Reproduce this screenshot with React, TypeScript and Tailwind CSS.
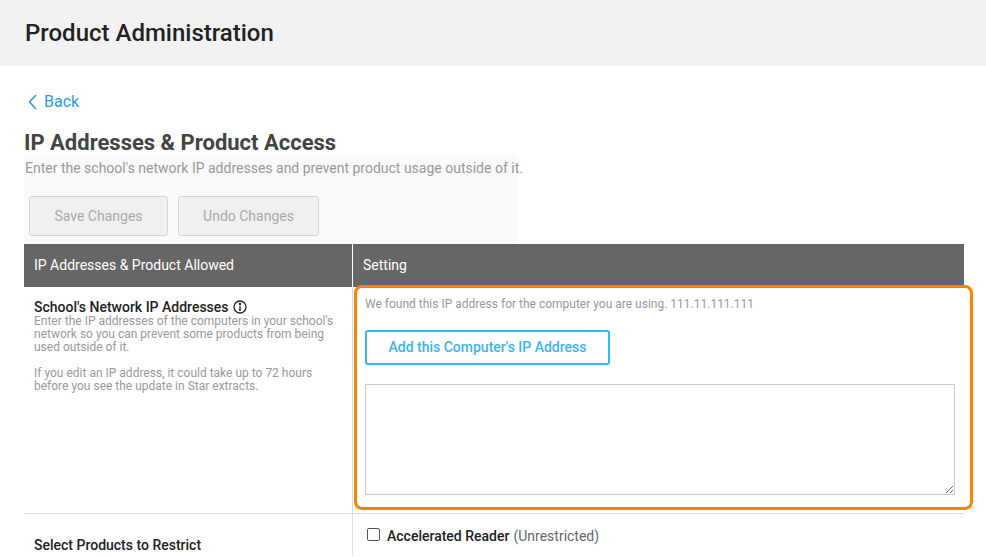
export default function App() {
  return (
    <div className="w-[986px] h-[557px] overflow-hidden bg-white text-[#333] [font-family:Roboto,Arial,sans-serif]">
      <div className="h-[66px] bg-[#f2f2f2] flex items-center px-[25px]">
        <h1 className="text-[24px] font-medium text-[#222]">Product Administration</h1>
      </div>
      <div className="pl-[24px] pr-[22px]">
        <div className="mt-[26px] flex items-center gap-[6px] text-[#2e9ce6] text-[16px] pl-[4px] leading-[20px]">
          <svg width="10" height="16" viewBox="0 0 10 16" fill="none" stroke="currentColor" strokeWidth="1.6"><path d="M8 1 1.5 8 8 15" /></svg>
          Back
        </div>
        <h2 className="mt-[17px] text-[22px] font-bold text-[#444] leading-[28px]">IP Addresses &amp; Product Access</h2>
        <div className="w-[494px] bg-[#fafafa] -mt-[2px] pb-[8px]">
          <p className="text-[14px] text-[#999] leading-[26px] pl-[1px] whitespace-nowrap">Enter the school's network IP addresses and prevent product usage outside of it.</p>
          <div className="flex gap-[10px] mt-[15px] pl-[5px]">
            <button className="w-[139px] h-[40px] border border-[#d6d6d6] rounded-[3px] bg-[#f0f0f0] text-[#aaa] text-[14px]">Save Changes</button>
            <button className="w-[141px] h-[40px] border border-[#d6d6d6] rounded-[3px] bg-[#f0f0f0] text-[#aaa] text-[14px]">Undo Changes</button>
          </div>
        </div>
        <div className="w-[940px]">
          <div className="flex h-[43px] bg-[#666] text-white text-[14px]">
            <div className="w-[329px] border-r border-white flex items-center px-[10px]">IP Addresses &amp; Product Allowed</div>
            <div className="flex-1 flex items-center px-[10px]">Setting</div>
          </div>
          <div className="flex border-b border-[#ddd]">
            <div className="w-[329px] border-r border-[#ddd] px-[10px] pt-[12px]">
              <div className="flex items-center gap-[4px] text-[14px] text-[#222] font-medium leading-[16px]">
                School's Network IP Addresses
                <svg width="14" height="14" viewBox="0 0 14 14" fill="none" stroke="#222" strokeWidth="1.3"><circle cx="7" cy="7" r="6" /><path d="M7 6v4.2M6 10.2h2" /><circle cx="7" cy="4" r="0.6" fill="#222" /></svg>
              </div>
              <p className="text-[12px] text-[#999] leading-[13px] w-[305px]">Enter the IP addresses of the computers in your school's network so you can prevent some products from being used outside of it.</p>
              <p className="text-[12px] text-[#999] leading-[13px] mt-[13px] w-[305px]">If you edit an IP address, it could take up to 72 hours before you see the update in Star extracts.</p>
            </div>
            <div className="flex-1 relative h-[226px]">
              <div className="absolute left-[1px] top-[-2px] w-[619px] h-[225px] border-[3px] border-[#ff8200] rounded-[8px] px-[8px] pt-[8px]">
                <p className="text-[12px] text-[#999] leading-[16px]">We found this IP address for the computer you are using. 111.11.111.111</p>
                <button className="mt-[18px] w-[245px] h-[35px] border-2 border-[#3ab4f2] rounded-[3px] text-[#3ab4f2] text-[14px] font-medium">Add this Computer's IP Address</button>
                <textarea className="mt-[19px] block w-[590px] h-[111px] border border-[#ccc]" />
              </div>
            </div>
          </div>
          <div className="flex">
            <div className="w-[329px] border-r border-[#ddd] px-[10px] pt-[21px] text-[14px] font-medium text-[#222]">Select Products to Restrict</div>
            <div className="flex-1 px-[14px] pt-[12px] flex items-start gap-[7px] h-[40px] text-[14px]">
              <span className="mt-[2px] w-[13px] h-[13px] border border-[#555] rounded-[2px]" />
              <span className="text-[#222] font-medium">Accelerated Reader</span>
              <span className="text-[#666] -ml-[3px]">(Unrestricted)</span>
            </div>
          </div>
        </div>
      </div>
    </div>
  );
}
